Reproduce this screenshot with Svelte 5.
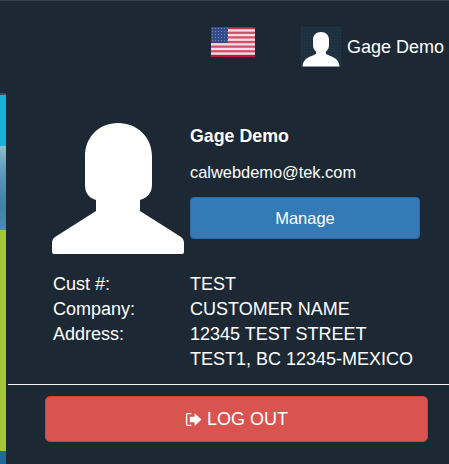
<script>
  const stripes = [0, 1, 2, 3, 4, 5, 6];
  const rows = [
    ['Cust #:', 'TEST'],
    ['Company:', 'CUSTOMER NAME'],
    ['Address:', '12345 TEST STREET'],
    ['', 'TEST1, BC 12345-MEXICO']
  ];
</script>

<div class="page">
  <aside class="strip">
    <div class="s-line"></div>
    <div class="s-cyan"></div>
    <div class="s-photo"></div>
    <div class="s-green"></div>
    <div class="s-blue"></div>
  </aside>

  <section class="panel">
    <header class="top">
      <svg class="flag" viewBox="0 0 44 30" width="44" height="30" aria-label="United States flag">
        <defs>
          <pattern id="stars" width="3" height="3" patternUnits="userSpaceOnUse">
            <rect width="3" height="3" fill="#2f4a88" />
            <circle cx="1.500" cy="1.500" r="0.700" fill="#6f82b3" />
          </pattern>
        </defs>
        <rect width="44" height="30" fill="#f1dfe5" />
        {#each stripes as i}
          <rect y={i * 4.62} width="44" height="2.31" fill="#d4506a" />
        {/each}
        <rect width="44" height="1.500" fill="#c4163a" />
        <rect y="28" width="44" height="2" fill="#c4163a" />
        <rect width="17" height="16" fill="url(#stars)" />
      </svg>
      <div class="mini">
        <svg viewBox="0 0 40 40" width="40" height="40">
          <path fill="#fff" d="M12 13C12 8 15 5 20 5s8 3 8 8v5c0 3-1 5-3 6.500V27c4 2.500 13 3 13.500 12.500H1.500C2 30 11 29.500 15 27v-2.500c-2-1.500-3-3.500-3-6.500z" />
        </svg>
      </div>
      <span class="top-name">Gage Demo</span>
    </header>

    <div class="profile">
      <svg class="avatar" viewBox="0 0 132 131" width="132" height="131">
        <path fill="#fff" d="M33 33C33 14 47 0 66 0s34 14 34 33v29c0 8-5 13-12 15v11l41 26q3 2 3 5v10q0 2-2 2H2q-2 0-2-2v-10q0-3 3-5l41-26V77c-7-2-11-7-11-15z" />
      </svg>
      <div class="who">
        <strong>Gage Demo</strong>
        <span class="mail">calwebdemo@tek.com</span>
        <button class="manage">Manage</button>
      </div>
    </div>

    <dl class="details">
      {#each rows as [k, v]}
        <dt>{k}</dt>
        <dd>{v}</dd>
      {/each}
    </dl>

    <hr />

    <button class="logout">
      <svg viewBox="0 0 16 14" width="17" height="15">
        <path fill="none" stroke="#fff" stroke-width="1.300" d="M6 1.500H2.500a1 1 0 0 0-1 1v9a1 1 0 0 0 1 1H6" />
        <path fill="#fff" d="M4.500 4.500H9V1l6.500 6L9 13V9.500H4.500z" />
      </svg>
      LOG OUT
    </button>
  </section>
</div>

<style>
  :global(body) {
    margin: 0;
    background: #1c2935;
  }
  .page {
    display: flex;
    width: 449px;
    height: 464px;
    box-sizing: border-box;
    overflow: hidden;
    border-top: 1px solid #3a4149;
    font: 18px/1.25 "Liberation Sans", Arial, sans-serif;
    color: #fff;
  }
  .strip {
    width: 6px;
    flex: none;
    display: flex;
    flex-direction: column;
    padding-top: 92px;
    box-sizing: border-box;
  }
  .s-line { height: 2px; background: #3f4a52; }
  .s-cyan { height: 51px; background: #16b3d8; }
  .s-photo { height: 84px; background: linear-gradient(#8fbccd, #5c9ab9 30%, #3f81a8 70%, #4a8fb0); }
  .s-green { height: 221px; background: #a2c837; }
  .s-blue { flex: 1; background: #1f6a9c; }
  .panel {
    flex: 1;
    min-width: 0;
    background: #1c2935;
    border-bottom-left-radius: 7px;
  }
  .top {
    display: flex;
    align-items: flex-start;
    padding: 26px 0 0 205px;
    height: 122px;
    box-sizing: border-box;
  }
  .flag { display: block; }
  .mini {
    width: 40px;
    height: 40px;
    margin-left: 46px;
    background-color: #1c2e3d;
    background-image:
      repeating-linear-gradient(90deg, #1f3546 0 1px, transparent 1px 3px),
      repeating-linear-gradient(0deg, #1f3546 0 1px, transparent 1px 3px);
  }
  .mini svg { display: block; }
  .top-name {
    margin-left: 6px;
    line-height: 40px;
    height: 40px;
  }
  .profile {
    display: flex;
    align-items: flex-start;
    padding-left: 46px;
    height: 149px;
  }
  .avatar { display: block; flex: none; }
  .who {
    display: flex;
    flex-direction: column;
    margin-left: 6px;
    padding-top: 3px;
    width: 230px;
  }
  .who strong { line-height: 20px; font-size: 17.800px; }
  .mail { margin-top: 16px; line-height: 20px; font-size: 16.400px; }
  .manage {
    margin-top: 15px;
    height: 42px;
    border: 1px solid #2e6da4;
    border-radius: 4px;
    background: #337ab7;
    color: #fff;
    font: 16.500px "Liberation Sans", Arial, sans-serif;
    padding: 0;
  }
  .details {
    display: grid;
    grid-template-columns: 137px 1fr;
    grid-auto-rows: 25px;
    margin: 0;
    padding-left: 47px;
    line-height: 25px;
  }
  dt { font-weight: normal; }
  dd { margin: 0; }
  hr {
    margin: 12px 0 0 2px;
    border: 0;
    height: 1px;
    background: #f4f4f4;
  }
  .logout {
    display: flex;
    align-items: center;
    justify-content: center;
    gap: 5px;
    width: 383px;
    height: 46px;
    margin: 11px 0 0 39px;
    border: 1px solid #d43f3a;
    border-radius: 5px;
    background: #d9534f;
    color: #fff;
    font: 18px "Liberation Sans", Arial, sans-serif;
    padding: 0;
  }
</style>
